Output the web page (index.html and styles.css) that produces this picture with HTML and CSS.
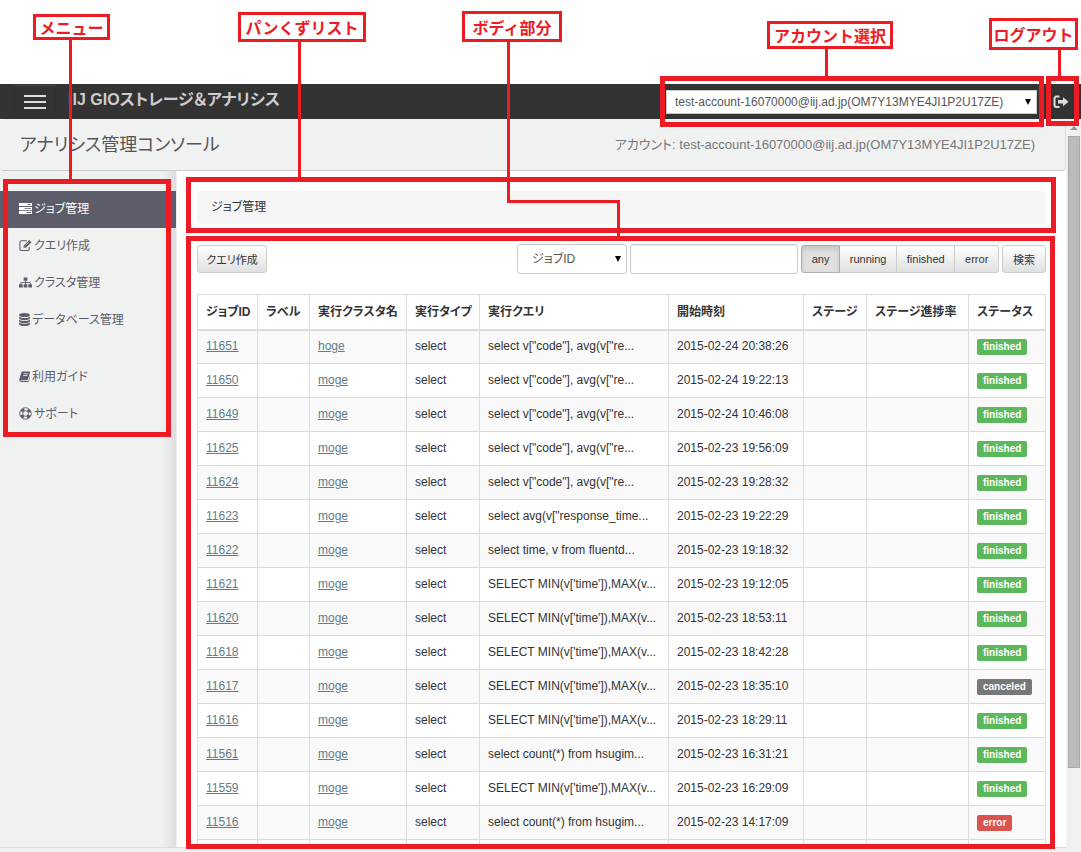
FILE: index.html
```html
<!DOCTYPE html>
<html lang="ja">
<head>
    <meta charset="utf-8">
    <title>アナリシス管理コンソール</title>
    <link rel="stylesheet" href="styles.css">
</head>
<body>
    <div class="app">
        <nav class="navbar">
            <button type="button" class="menu-toggle" aria-label="メニュー">
                <span class="bar"></span>
                <span class="bar"></span>
                <span class="bar"></span>
            </button>
            <a href="#" class="brand">IIJ GIOストレージ＆アナリシス</a>
            <div class="select-wrap account-select">
                <select aria-label="アカウント選択">
                    <option>test-account-16070000@iij.ad.jp(OM7Y13MYE4JI1P2U17ZE)</option>
                </select>
            </div>
            <a href="#" class="logout" aria-label="ログアウト">
                <svg width="16" height="14" viewBox="0 0 16 14"><path d="M6.5 1.5H3.5A2 2 0 0 0 1.5 3.5V10A2 2 0 0 0 3.5 12H6.5" fill="none" stroke="#ddd" stroke-width="2"/><path d="M5 5H10V2.2L15.5 6.8L10 11.3V8.6H5Z" fill="#ddd"/></svg>
            </a>
        </nav>

        <div class="window">
            <div class="content">
                <header class="page-header">
                    <h1>アナリシス管理コンソール</h1>
                    <span class="account-name">アカウント: test-account-16070000@iij.ad.jp(OM7Y13MYE4JI1P2U17ZE)</span>
                </header>

                <div class="columns">
                    <aside class="sidebar">
                        <ul class="menu">
                            <li class="active"><a href="#">
                                <svg viewBox="0 0 14 14"><path d="M0 1H14V4.4H0ZM0 5.4H14V8.8H0ZM0 9.8H14V13H0Z" fill="#fff"/><path d="M9 2.3H13V3.2H9ZM6 6.6H13V7.6H6ZM8 10.9H13V11.9H8Z" fill="#5c5c6b"/></svg>
                                ジョブ管理</a></li>
                            <li><a href="#">
                                <svg viewBox="0 0 14 14"><path d="M8.5 2H2.8A1.8 1.8 0 0 0 1 3.8V10.7A1.8 1.8 0 0 0 2.8 12.5H9.2A1.8 1.8 0 0 0 11 10.7V8.5" fill="none" stroke="#5c5c6b" stroke-width="1.1"/><path d="M5 7.2L11 1L13.5 3.500L7.5 9.5H5Z" fill="#5c5c6b"/><path d="M6 8.3L6.8 7.5M7 6.8L10.8 3" stroke="#f0f2f1" stroke-width=".6"/></svg>
                                クエリ作成</a></li>
                            <li><a href="#">
                                <svg viewBox="0 0 14 14"><path d="M5 1.5H9V5H5ZM0 9H4V12.5H0ZM5 9H9V12.5H5ZM10 9H14V12.5H10Z" fill="#5c5c6b"/><path d="M7 5V9M2 9.2V7H12V9.2" fill="none" stroke="#5c5c6b"/></svg>
                                クラスタ管理</a></li>
                            <li><a href="#">
                                <svg class="narrow" viewBox="0 0 12 14"><path d="M0 2.2C0 .8 2.7 0 6 0S12 .8 12 2.2C12 3.7 9.3 4.4 6 4.4S0 3.7 0 2.2ZM0 4C1.4 5 3.6 5.3 6 5.3S10.6 5 12 4V5.4C12 6.9 9.3 7.7 6 7.7S0 6.9 0 5.4ZM0 7.2C1.4 8.2 3.6 8.6 6 8.6S10.6 8.2 12 7.2V8.6C12 10 9.3 10.8 6 10.8S0 10 0 8.6ZM0 10.4C1.4 11.4 3.6 11.7 6 11.7S10.6 11.4 12 10.4V11.8C12 13.2 9.3 14 6 14S0 13.2 0 11.8Z" fill="#5c5c6b"/></svg>
                                データベース管理</a></li>
                            <li class="separated"><a href="#">
                                <svg class="narrow" viewBox="0 0 12 14"><path d="M4.2 1.5H11Q12.3 1.7 12 3L9.8 10Q9.5 11 8.5 11H2.2Q1.5 11.1 1.7 11.6Q2 12 2.6 12H9.3Q10.2 12 10.5 11.2L12 6V7.5L10.9 11.8Q10.5 13 9.3 13H2.4Q.2 12.8 .2 10.6L2.5 3Q3 1.5 4.2 1.5Z" fill="#5c5c6b"/><path d="M5 4H9.7M4.4 6H9.1" stroke="#f0f2f1" stroke-width=".9"/></svg>
                                利用ガイド</a></li>
                            <li><a href="#">
                                <svg viewBox="0 0 14 14"><circle cx="7" cy="7" r="6.2" fill="none" stroke="#5c5c6b"/><circle cx="7" cy="7" r="3" fill="none" stroke="#5c5c6b"/><circle cx="7" cy="7" r="4.6" fill="none" stroke="#5c5c6b" stroke-width="2.8" stroke-dasharray="3.6 3.626" stroke-dashoffset="-1.8"/></svg>
                                サポート</a></li>
                        </ul>
                    </aside>

                    <main class="main">
                        <ol class="breadcrumb">
                            <li>ジョブ管理</li>
                        </ol>

                        <form class="toolbar">
                            <button type="button" class="btn create">クエリ作成</button>
                            <div class="select-wrap search-type">
                                <select aria-label="検索項目">
                                    <option>ジョブID</option>
                                </select>
                            </div>
                            <input type="text" class="search-text" aria-label="検索文字列">
                            <div class="btn-group">
                                <button type="button" class="btn active">any</button>
                                <button type="button" class="btn">running</button>
                                <button type="button" class="btn">finished</button>
                                <button type="button" class="btn">error</button>
                            </div>
                            <button type="button" class="btn">検索</button>
                        </form>

                        <table class="jobs">
                            <colgroup>
                                <col class="col-id">
                                <col class="col-label">
                                <col class="col-cluster">
                                <col class="col-type">
                                <col class="col-query">
                                <col class="col-time">
                                <col class="col-stage">
                                <col class="col-progress">
                                <col class="col-status">
                            </colgroup>
                            <thead>
                                <tr><th>ジョブID</th><th>ラベル</th><th>実行クラスタ名</th><th>実行タイプ</th><th>実行クエリ</th><th>開始時刻</th><th>ステージ</th><th>ステージ進捗率</th><th>ステータス</th></tr>
                            </thead>
                            <tbody>
                                <tr><td><a href="#">11651</a></td><td></td><td><a href="#">hoge</a></td><td>select</td><td>select v["code"], avg(v["re...</td><td>2015-02-24 20:38:26</td><td></td><td></td><td><span class="label success">finished</span></td></tr>
                                <tr><td><a href="#">11650</a></td><td></td><td><a href="#">moge</a></td><td>select</td><td>select v["code"], avg(v["re...</td><td>2015-02-24 19:22:13</td><td></td><td></td><td><span class="label success">finished</span></td></tr>
                                <tr><td><a href="#">11649</a></td><td></td><td><a href="#">moge</a></td><td>select</td><td>select v["code"], avg(v["re...</td><td>2015-02-24 10:46:08</td><td></td><td></td><td><span class="label success">finished</span></td></tr>
                                <tr><td><a href="#">11625</a></td><td></td><td><a href="#">moge</a></td><td>select</td><td>select v["code"], avg(v["re...</td><td>2015-02-23 19:56:09</td><td></td><td></td><td><span class="label success">finished</span></td></tr>
                                <tr><td><a href="#">11624</a></td><td></td><td><a href="#">moge</a></td><td>select</td><td>select v["code"], avg(v["re...</td><td>2015-02-23 19:28:32</td><td></td><td></td><td><span class="label success">finished</span></td></tr>
                                <tr><td><a href="#">11623</a></td><td></td><td><a href="#">moge</a></td><td>select</td><td>select avg(v["response_time...</td><td>2015-02-23 19:22:29</td><td></td><td></td><td><span class="label success">finished</span></td></tr>
                                <tr><td><a href="#">11622</a></td><td></td><td><a href="#">moge</a></td><td>select</td><td>select time, v from fluentd...</td><td>2015-02-23 19:18:32</td><td></td><td></td><td><span class="label success">finished</span></td></tr>
                                <tr><td><a href="#">11621</a></td><td></td><td><a href="#">moge</a></td><td>select</td><td>SELECT MIN(v['time']),MAX(v...</td><td>2015-02-23 19:12:05</td><td></td><td></td><td><span class="label success">finished</span></td></tr>
                                <tr><td><a href="#">11620</a></td><td></td><td><a href="#">moge</a></td><td>select</td><td>SELECT MIN(v['time']),MAX(v...</td><td>2015-02-23 18:53:11</td><td></td><td></td><td><span class="label success">finished</span></td></tr>
                                <tr><td><a href="#">11618</a></td><td></td><td><a href="#">moge</a></td><td>select</td><td>SELECT MIN(v['time']),MAX(v...</td><td>2015-02-23 18:42:28</td><td></td><td></td><td><span class="label success">finished</span></td></tr>
                                <tr><td><a href="#">11617</a></td><td></td><td><a href="#">moge</a></td><td>select</td><td>SELECT MIN(v['time']),MAX(v...</td><td>2015-02-23 18:35:10</td><td></td><td></td><td><span class="label default">canceled</span></td></tr>
                                <tr><td><a href="#">11616</a></td><td></td><td><a href="#">moge</a></td><td>select</td><td>SELECT MIN(v['time']),MAX(v...</td><td>2015-02-23 18:29:11</td><td></td><td></td><td><span class="label success">finished</span></td></tr>
                                <tr><td><a href="#">11561</a></td><td></td><td><a href="#">moge</a></td><td>select</td><td>select count(*) from hsugim...</td><td>2015-02-23 16:31:21</td><td></td><td></td><td><span class="label success">finished</span></td></tr>
                                <tr><td><a href="#">11559</a></td><td></td><td><a href="#">moge</a></td><td>select</td><td>SELECT MIN(v['time']),MAX(v...</td><td>2015-02-23 16:29:09</td><td></td><td></td><td><span class="label success">finished</span></td></tr>
                                <tr><td><a href="#">11516</a></td><td></td><td><a href="#">moge</a></td><td>select</td><td>select count(*) from hsugim...</td><td>2015-02-23 14:17:09</td><td></td><td></td><td><span class="label danger">error</span></td></tr>
                                <tr><td></td><td></td><td></td><td></td><td></td><td></td><td></td><td></td><td></td></tr>
                            </tbody>
                        </table>
                    </main>
                </div>
            </div>
            <div class="scrollbar">
                <span class="scroll-up"></span>
                <span class="scroll-thumb"></span>
            </div>
        </div>
    </div>

    <!-- callouts over the console -->
    <div class="callout callout-menu">メニュー</div>
    <div class="callout callout-breadcrumb">パンくずリスト</div>
    <div class="callout callout-body">ボディ部分</div>
    <div class="callout callout-account">アカウント選択</div>
    <div class="callout callout-logout">ログアウト</div>

    <div class="line line-menu"></div>
    <div class="line line-breadcrumb"></div>
    <div class="line line-body"></div>
    <div class="line line-body-across"></div>
    <div class="line line-body-down"></div>
    <div class="line line-account"></div>
    <div class="line line-logout"></div>

    <div class="frame frame-menu"></div>
    <div class="frame frame-breadcrumb"></div>
    <div class="frame frame-body"></div>
    <div class="frame frame-account"></div>
    <div class="frame frame-logout"></div>
</body>
</html>
```
FILE: styles.css
```css
* {
    box-sizing: border-box;
}

body {
    position: relative;
    margin: 0;
    height: 100vh;
    overflow: hidden;
    font-family: "Liberation Sans", "Noto Sans CJK JP", sans-serif;
    font-feature-settings: "palt";
    font-size: 12px;
    line-height: 18px;
    color: #333;
    background-color: #fff;
}

button,
input,
select {
    font-family: inherit;
    font-feature-settings: inherit;
    margin: 0;
}

.app {
    display: flex;
    flex-direction: column;
    height: 100%;
    padding-top: 84px;
}

/* Navbar */
.navbar {
    display: flex;
    flex: none;
    align-items: center;
    height: 35px;
    padding: 0 12px 0 14px;
    background-color: #333;
}

.menu-toggle {
    display: flex;
    flex-direction: column;
    justify-content: center;
    gap: 4px;
    width: 42px;
    height: 33px;
    padding: 0 9px;
    background: none;
    border: 1px solid #303030;
    border-top-color: #484848;
    cursor: pointer;
}

.bar {
    height: 2px;
    background-color: #ddd;
}

.brand {
    margin: 0 auto 4px 12px;
    font-size: 16px;
    font-weight: bold;
    color: #ccc;
    text-decoration: none;
}

.select-wrap {
    position: relative;
}

.select-wrap::after {
    content: "";
    position: absolute;
    top: 50%;
    right: 6px;
    margin-top: -3px;
    border: 3px solid transparent;
    border-top: 6px solid #000;
    border-bottom: 0;
    pointer-events: none;
}

.select-wrap select {
    width: 100%;
    appearance: none;
    color: #555;
    background-color: #fff;
    border: 1px solid #ccc;
}

.account-select {
    width: 371px;
    margin-right: 16px;
}

.account-select select {
    height: 24px;
    padding: 0 8px;
    font-size: 12px;
}

.logout {
    display: flex;
}

/* Page */
.window {
    display: flex;
    flex: 1;
    min-height: 0;
}

.content {
    display: flex;
    flex: 1;
    flex-direction: column;
    min-width: 0;
    border-bottom: 4px solid #f0f0f0;
}

.page-header {
    display: flex;
    flex: none;
    align-items: center;
    justify-content: space-between;
    height: 52px;
    padding: 0 30px 0 20px;
    background-color: #f0f2f1;
    border-bottom: 1px solid #ccc;
    border-right: 1px solid #ddd;
    border-radius: 4px;
}

.page-header h1 {
    margin: 0;
    font-size: 18px;
    font-weight: normal;
    color: #555;
}

.account-name {
    font-size: 13px;
    color: #777;
}

.columns {
    display: flex;
    flex: 1;
    min-height: 0;
    border-bottom: 1px solid #ddd;
}

.sidebar {
    flex: none;
    width: 177px;
    padding-top: 20px;
    background: linear-gradient(to left, #dcdedd, #f0f2f1 14px);
    border-right: 1px solid #eee;
}

.menu {
    margin: 0;
    padding: 0;
    list-style: none;
}

.menu a {
    display: flex;
    align-items: center;
    gap: 2px;
    height: 37px;
    padding: 0 0 2px 19px;
    color: #5c5c6b;
    text-decoration: none;
}

.menu svg {
    width: 13px;
    height: 13px;
}

.menu .narrow {
    width: 11px;
}

.menu .active a {
    color: #fff;
    background-color: #5c5c6b;
}

.menu .separated {
    margin-top: 20px;
}

.main {
    flex: 1;
    min-width: 0;
    overflow: hidden;
    padding: 20px 20px 0;
}

.breadcrumb {
    margin: 0 0 20px;
    padding: 7px 14px;
    height: 33px;
    list-style: none;
    background-color: #f5f5f5;
    border-radius: 4px;
}

.toolbar {
    display: flex;
    align-items: center;
    gap: 3px;
    height: 30px;
    margin-bottom: 20px;
}

.btn {
    height: 28px;
    padding: 0 10px;
    font-size: 11px;
    color: #333;
    background: linear-gradient(#fff, #e0e0e0);
    border: 1px solid #ccc;
    border-radius: 3px;
    cursor: pointer;
}

.create {
    width: 70px;
    padding: 0;
    margin-right: auto;
}

.btn-group {
    display: flex;
    width: 198px;
}

.btn-group .btn {
    flex: auto;
    padding: 0;
    border-radius: 0;
}

.btn-group .btn + .btn {
    border-left: 0;
}

.btn-group .btn:first-child {
    border-radius: 3px 0 0 3px;
}

.btn-group .btn:last-child {
    border-radius: 0 3px 3px 0;
}

.btn-group .active {
    background: #e0e0e0;
    border-color: #adadad;
    box-shadow: inset 0 3px 5px rgba(0, 0, 0, 0.125);
}

.search-type {
    width: 110px;
}

.search-type select,
.search-text {
    display: block;
    height: 30px;
    font-size: 12px;
    border: 1px solid #ccc;
    border-radius: 3px;
}

.search-type select {
    padding: 0 14px;
}

.search-text {
    width: 168px;
    padding: 0 10px;
    box-shadow: inset 0 1px 1px rgba(0, 0, 0, 0.075);
}

/* Job table */
.jobs {
    width: 100%;
    table-layout: fixed;
    border-collapse: collapse;
}

.jobs th,
.jobs td {
    height: 34px;
    padding: 0 8px;
    border: 1px solid #ddd;
    text-align: left;
    white-space: nowrap;
}

.jobs th {
    height: 35px;
    border-bottom-width: 2px;
}

.jobs td {
    padding-bottom: 1px;
}

.jobs tbody tr:nth-child(odd) {
    background-color: #f9f9f9;
}

.jobs a {
    color: #5f7d88;
}

.col-id { width: 60px; }
.col-label { width: 52px; }
.col-cluster { width: 97px; }
.col-type { width: 73px; }
.col-time { width: 135px; }
.col-stage { width: 63px; }
.col-progress { width: 102px; }
.col-status { width: 77px; }

.label {
    display: inline-block;
    padding: 0 6px;
    font-size: 10px;
    font-weight: bold;
    line-height: 16px;
    color: #fff;
    border-radius: 2px;
    vertical-align: middle;
}

.success {
    background-color: #5cb85c;
}

.default {
    background-color: #777;
}

.danger {
    background-color: #d9534f;
}

/* Scrollbar */
.scrollbar {
    display: flex;
    flex: none;
    flex-direction: column;
    align-items: center;
    gap: 6px;
    width: 15px;
    padding-top: 7px;
    background-color: #f0f0f0;
}

.scroll-up {
    border: 4px solid transparent;
    border-top: 0;
    border-bottom-color: #999;
}

.scroll-thumb {
    width: 12px;
    height: 632px;
    background-color: #bbb;
    border: 1px solid #a8a8a8;
}

/* Callouts */
.callout,
.line,
.frame {
    position: absolute;
    pointer-events: none;
}

.callout {
    display: flex;
    align-items: center;
    justify-content: center;
    font-family: "Noto Sans CJK JP", sans-serif;
    font-feature-settings: normal;
    font-size: 16px;
    font-weight: bold;
    color: #ed1c24;
    white-space: nowrap;
    background-color: #fff;
    border: 3px solid #ed1c24;
}

.callout-menu { top: 14px; left: 33px; width: 77px; height: 26px; }
.callout-breadcrumb { top: 12px; left: 238px; width: 128px; height: 30px; }
.callout-body { top: 11px; left: 462px; width: 100px; height: 31px; }
.callout-account { top: 21px; right: 188px; width: 126px; height: 28px; }
.callout-logout { top: 18px; right: 3px; width: 89px; height: 32px; }

.line {
    width: 3px;
    background-color: #ed1c24;
}

.line-menu { top: 40px; left: 69px; height: 140px; }
.line-breadcrumb { top: 42px; left: 298px; height: 137px; }
.line-body { top: 42px; left: 507px; height: 161px; }
.line-body-across { top: 200px; left: 507px; width: 113px; height: 3px; }
.line-body-down { top: 200px; left: 617px; height: 38px; }
.line-account { top: 49px; right: 253px; height: 28px; }
.line-logout { top: 50px; right: 20px; height: 28px; }

.frame {
    border: 5px solid #ed1c24;
}

.frame-menu { top: 179px; left: 3px; width: 168px; height: 258px; }
.frame-breadcrumb { top: 177px; left: 186px; right: 25px; height: 56px; }
.frame-body { top: 236px; left: 186px; right: 26px; bottom: 3px; }
.frame-account { top: 76px; right: 37px; width: 384px; height: 51px; }
.frame-logout { top: 76px; right: 2px; width: 33px; height: 50px; }
```
